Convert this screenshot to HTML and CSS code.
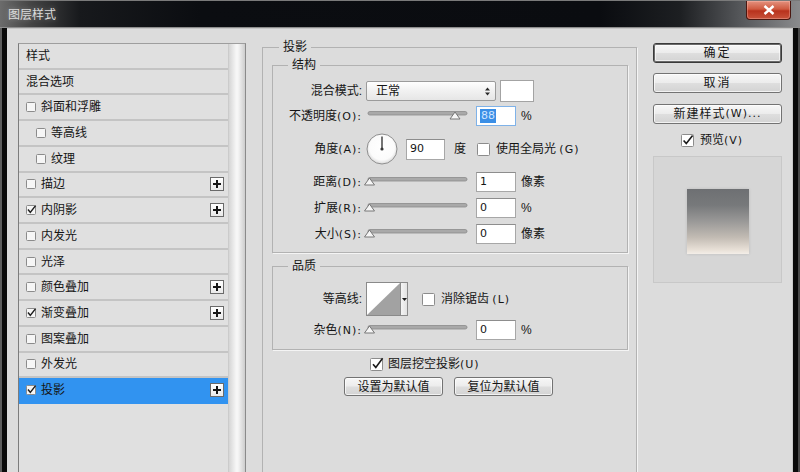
FILE: index.html
```html
<!DOCTYPE html>
<html lang="zh-CN">
<head>
<meta charset="utf-8">
<title>图层样式</title>
<link rel="stylesheet" href="styles.css">
</head>
<body>
<div class="window">
  <div class="titlebar">
    <span class="title">图层样式</span>
    <span class="close"><svg viewBox="0 0 12 10" width="12" height="10"><path d="M1.5 1L10.5 9M10.5 1L1.5 9"/></svg></span>
  </div>
  <div class="frame">
    <div class="client">
      <div class="col-left">
        <div class="listbox">
          <ul class="list">
            <li class="item"><span>样式</span></li>
            <li class="item"><span>混合选项</span></li>
            <li class="item"><svg class="lcb" viewBox="0 0 10 10"><rect x="0.5" y="0.5" width="9" height="9" rx="1"/></svg><span>斜面和浮雕</span></li>
            <li class="item sub"><svg class="lcb" viewBox="0 0 10 10"><rect x="0.5" y="0.5" width="9" height="9" rx="1"/></svg><span>等高线</span></li>
            <li class="item sub"><svg class="lcb" viewBox="0 0 10 10"><rect x="0.5" y="0.5" width="9" height="9" rx="1"/></svg><span>纹理</span></li>
            <li class="item"><svg class="lcb" viewBox="0 0 10 10"><rect x="0.5" y="0.5" width="9" height="9" rx="1"/></svg><span>描边</span><span class="plus"><svg viewBox="0 0 12 12"><path d="M6 2v8M2 6h8"/></svg></span></li>
            <li class="item"><svg class="lcb" viewBox="0 0 10 10"><rect x="0.5" y="0.5" width="9" height="9" rx="1"/><path d="M2 4.6L4.3 7.4L9.6 0.6"/></svg><span>内阴影</span><span class="plus"><svg viewBox="0 0 12 12"><path d="M6 2v8M2 6h8"/></svg></span></li>
            <li class="item"><svg class="lcb" viewBox="0 0 10 10"><rect x="0.5" y="0.5" width="9" height="9" rx="1"/></svg><span>内发光</span></li>
            <li class="item"><svg class="lcb" viewBox="0 0 10 10"><rect x="0.5" y="0.5" width="9" height="9" rx="1"/></svg><span>光泽</span></li>
            <li class="item"><svg class="lcb" viewBox="0 0 10 10"><rect x="0.5" y="0.5" width="9" height="9" rx="1"/></svg><span>颜色叠加</span><span class="plus"><svg viewBox="0 0 12 12"><path d="M6 2v8M2 6h8"/></svg></span></li>
            <li class="item"><svg class="lcb" viewBox="0 0 10 10"><rect x="0.5" y="0.5" width="9" height="9" rx="1"/><path d="M2 4.6L4.3 7.4L9.6 0.6"/></svg><span>渐变叠加</span><span class="plus"><svg viewBox="0 0 12 12"><path d="M6 2v8M2 6h8"/></svg></span></li>
            <li class="item"><svg class="lcb" viewBox="0 0 10 10"><rect x="0.5" y="0.5" width="9" height="9" rx="1"/></svg><span>图案叠加</span></li>
            <li class="item"><svg class="lcb" viewBox="0 0 10 10"><rect x="0.5" y="0.5" width="9" height="9" rx="1"/></svg><span>外发光</span></li>
            <li class="item selected"><svg class="lcb" viewBox="0 0 10 10"><rect x="0.5" y="0.5" width="9" height="9" rx="1"/><path d="M2 4.6L4.3 7.4L9.6 0.6"/></svg><span>投影</span><span class="plus"><svg viewBox="0 0 12 12"><path d="M6 2v8M2 6h8"/></svg></span></li>
          </ul>
          <div class="scrollbar"></div>
        </div>
      </div>

      <div class="col-mid">
        <fieldset class="group outer">
          <legend>投影</legend>
          <fieldset class="group inner struct">
            <legend>结构</legend>
            <div class="frow r1">
              <span class="lbl">混合模式:</span>
              <div class="select"><span>正常</span><svg class="updown" viewBox="0 0 5 9" width="5" height="9"><path d="M0 3.6L2.5 0.4L5 3.6ZM0 5.4L2.5 8.6L5 5.4Z"/></svg></div>
              <span class="swatch"></span>
            </div>
            <div class="frow r2">
              <span class="lbl">不透明度<span class="en">(O):</span></span>
              <svg class="slider" viewBox="0 0 108 14" width="108" height="14"><rect class="track" x="4" y="2.5" width="99" height="3.5" rx="1.75"/><path class="thumb" d="M91 3L96 10H86Z"/></svg>
              <span class="num focus"><span class="sel">88</span></span>
              <span class="unit">%</span>
            </div>
            <div class="frow r3">
              <span class="lbl">角度<span class="en">(A):</span></span>
              <svg class="dial" viewBox="0 0 32 32" width="32" height="32">
                <defs><radialGradient id="dg" cx="50%" cy="45%" r="55%"><stop offset="0" stop-color="#ffffff"/><stop offset="0.75" stop-color="#fbfbfb"/><stop offset="1" stop-color="#d9d9d9"/></radialGradient></defs>
                <circle cx="16" cy="16" r="15" fill="url(#dg)" stroke="#8f8f8f"/>
                <path d="M16 16V3.5" stroke="#3a3a3a" stroke-width="1.4"/>
                <circle cx="16" cy="16" r="1.6" fill="#3a3a3a"/>
              </svg>
              <span class="num angle">90</span>
              <span class="deg">度</span>
              <svg class="cb gl" viewBox="0 0 13 13" width="13" height="13"><rect x="0.5" y="0.5" width="12" height="12" rx="1"/></svg>
              <span class="cbtext">使用全局光 <span class="en">(G)</span></span>
            </div>
            <div class="frow r4">
              <span class="lbl">距离<span class="en">(D):</span></span>
              <svg class="slider" viewBox="0 0 108 14" width="108" height="14"><rect class="track" x="4" y="2.5" width="99" height="3.5" rx="1.75"/><path class="thumb" d="M5.5 3L10.5 10H0.5Z"/></svg>
              <span class="num">1</span>
              <span class="unit">像素</span>
            </div>
            <div class="frow r5">
              <span class="lbl">扩展<span class="en">(R):</span></span>
              <svg class="slider" viewBox="0 0 108 14" width="108" height="14"><rect class="track" x="4" y="2.5" width="99" height="3.5" rx="1.75"/><path class="thumb" d="M5.5 3L10.5 10H0.5Z"/></svg>
              <span class="num">0</span>
              <span class="unit">%</span>
            </div>
            <div class="frow r6">
              <span class="lbl">大小<span class="en">(S):</span></span>
              <svg class="slider" viewBox="0 0 108 14" width="108" height="14"><rect class="track" x="4" y="2.5" width="99" height="3.5" rx="1.75"/><path class="thumb" d="M5.5 3L10.5 10H0.5Z"/></svg>
              <span class="num">0</span>
              <span class="unit">像素</span>
            </div>
          </fieldset>

          <fieldset class="group inner quality">
            <legend>品质</legend>
            <div class="frow q1">
              <span class="lbl">等高线:</span>
              <svg class="contour" viewBox="0 0 35 34" width="35" height="34"><rect x="0.5" y="0.5" width="34" height="33"/><path d="M1 33L34 1V33Z"/></svg>
              <span class="ddarrow"><svg viewBox="0 0 5 3" width="5" height="3"><path d="M0 0H5L2.5 3Z"/></svg></span>
              <svg class="cb aa" viewBox="0 0 13 13" width="13" height="13"><rect x="0.5" y="0.5" width="12" height="12" rx="1"/></svg>
              <span class="cbtext">消除锯齿 <span class="en">(L)</span></span>
            </div>
            <div class="frow q2">
              <span class="lbl">杂色<span class="en">(N):</span></span>
              <svg class="slider" viewBox="0 0 108 14" width="108" height="14"><rect class="track" x="4" y="2.5" width="99" height="3.5" rx="1.75"/><path class="thumb" d="M5.5 3L10.5 10H0.5Z"/></svg>
              <span class="num">0</span>
              <span class="unit">%</span>
            </div>
          </fieldset>

          <div class="knock">
            <svg class="cb" viewBox="0 0 14 14" width="14" height="14"><rect x="0.5" y="1.5" width="12" height="12" rx="1"/><path d="M3 7.2L5.8 10.4L12.6 1.2"/></svg>
            <span class="cbtext">图层挖空投影<span class="en">(U)</span></span>
          </div>
          <div class="defaults">
            <button class="btn small">设置为默认值</button>
            <button class="btn small">复位为默认值</button>
          </div>
        </fieldset>
      </div>

      <div class="col-right">
        <button class="btn main default">确定</button>
        <button class="btn main cancel">取消</button>
        <button class="btn main newstyle">新建样式<span class="en">(W)...</span></button>
        <div class="preview-toggle">
          <svg class="cb" viewBox="0 0 13 13" width="13" height="13"><rect x="0.5" y="0.5" width="12" height="12" rx="1"/><path d="M2.6 6.4L5.3 9.6L11.6 1.6"/></svg>
          <span class="cbtext">预览<span class="en">(V)</span></span>
        </div>
        <div class="preview">
          <div class="sample"></div>
        </div>
      </div>
    </div>
  </div>
</div>
</body>
</html>
```

FILE: styles.css
```css
* { box-sizing: border-box; }

html, body {
  margin: 0;
  padding: 0;
}

body {
  width: 800px;
  height: 472px;
  overflow: hidden;
  background: #0b0b0b;
  font-family: "Liberation Sans", "Noto Sans CJK SC", sans-serif;
  font-size: 12px;
  line-height: 16px;
  color: #151515;
}

.window {
  display: flex;
  flex-direction: column;
  width: 800px;
  height: 472px;
  overflow: hidden;
}

/* ---------- title bar ---------- */
.titlebar {
  height: 28px;
  flex: none;
  display: flex;
  justify-content: space-between;
  align-items: flex-start;
  padding-left: 8px;
  border-top: 1px solid #7a7a7a;
  border-bottom: 1px solid #8e8e8e;
  background: linear-gradient(90deg, #6c6c6c 0, #454545 30px, #17191c 80px, #0b0d11 200px, #0a0c10 600px, #1d1f22 680px, #55575a 740px, #8a8b8d 800px);
}

.title {
  margin-top: 6px;
  color: #dcdcdc;
  font-size: 12px;
  line-height: 16px;
  text-shadow: 0 0 5px rgba(255, 255, 255, 0.35);
}

.close {
  width: 45px;
  height: 19px;
  margin-right: 9px;
  display: flex;
  align-items: center;
  justify-content: center;
  border: 1px solid #4a1710;
  border-top: none;
  border-radius: 0 0 4px 4px;
  background: linear-gradient(#e4927f, #cf5a40 45%, #b8321d 55%, #c8523a);
  box-shadow: inset 0 0 0 1px rgba(255, 200, 190, 0.35);
}

.close svg path {
  stroke: #ffffff;
  stroke-width: 2.4;
  fill: none;
}

/* ---------- frame ---------- */
.frame {
  flex: 1;
  display: flex;
  min-height: 0;
  padding: 0 8px 0 7px;
  background: #0b0b0b;
  box-shadow: inset 2px 0 #5e5e5e, inset -2px 0 #4a4a4a;
}

.client {
  flex: 1;
  height: 444px;
  display: flex;
  gap: 16px;
  padding: 10px 10px 0 11px;
  background: #dcdcdc;
  border-top: 1px solid #c6c6c6;
  border-right: 1px solid #c9c9c9;
}

/* ---------- left list ---------- */
.col-left {
  width: 228px;
  flex: none;
  padding-top: 4px;
}

.listbox {
  display: flex;
  width: 228px;
  height: 429px;
  border-left: 1px solid #7c7c7c;
  border-top: 1px solid #9e9e9e;
  border-right: 1px solid #8a8a8a;
  background: #e0e0e0;
}

.list {
  list-style: none;
  margin: 0;
  padding: 0;
  width: 209px;
  flex: none;
}

.item {
  display: flex;
  align-items: center;
  height: 25.72px;
  padding-left: 7px;
  border-bottom: 2px solid #c4c4c4;
  white-space: nowrap;
}

.item.sub {
  padding-left: 17px;
}

.item.selected {
  background: #3193f0;
  border-bottom-color: #3193f0;
}

.lcb {
  width: 10px;
  height: 10px;
  flex: none;
  margin-right: 5px;
  overflow: visible;
}

.lcb rect {
  fill: #f6f6f6;
  stroke: #8b8b8b;
  stroke-width: 1;
}

.lcb path {
  fill: none;
  stroke: #1c1c1c;
  stroke-width: 1.5;
}

.plus {
  margin-left: auto;
  margin-right: 4px;
  width: 14px;
  height: 14px;
  display: flex;
  align-items: center;
  justify-content: center;
  border: 1px solid #6a6a6a;
  background: linear-gradient(#ffffff, #e9e9e9);
}

.plus svg {
  width: 12px;
  height: 12px;
}

.plus path {
  stroke: #161616;
  stroke-width: 2;
  fill: none;
}

.scrollbar {
  width: 17px;
  flex: none;
  border-left: 1px solid #cbcbcb;
  background: linear-gradient(90deg, #d5d5d5, #f6f6f6 45%, #f6f6f6 55%, #cdcdcd);
}

/* ---------- middle groups ---------- */
.col-mid {
  width: 375px;
  flex: none;
}

.group {
  margin: 0;
  padding: 0;
  min-width: 0;
  border: 1px solid #b2b2b2;
  box-shadow: 1px 1px 0 #f4f4f4;
}

.group > legend {
  padding: 0 4px;
  height: 16px;
  line-height: 16px;
  color: #151515;
}

.outer {
  width: 375px;
  height: 433px;
  border-bottom: none;
}

.outer > legend {
  margin-left: 16px;
}

.inner {
  margin: 0 8px 0 9px;
}

.inner > legend {
  margin-left: 15px;
}

.struct {
  margin-top: 2px;
  padding: 7px 0 7px 0;
}

.quality {
  margin-top: 5px;
  padding: 8px 0 8px 0;
}

.frow {
  display: flex;
  align-items: center;
  height: 22px;
  white-space: nowrap;
}

.r2 { margin-top: 3px; }
.r3 { margin-top: 6px; height: 32px; }
.r4 { margin-top: 6px; }
.r5 { margin-top: 4px; }
.r6 { margin-top: 4px; }
.q1 { height: 34px; }
.q2 { margin-top: 3px; }

.lbl {
  width: 89px;
  flex: none;
  text-align: right;
}

.en {
  font-family: "DejaVu Sans", "Liberation Sans", sans-serif;
  font-size: 11px;
  letter-spacing: 1px;
}

.select {
  width: 130px;
  height: 20px;
  margin-left: 4px;
  display: flex;
  align-items: center;
  justify-content: space-between;
  padding: 0 5px 0 9px;
  border: 1px solid #9b9b9b;
  border-radius: 2px;
  background: linear-gradient(#fefefe, #f1f1f1 50%, #e6e6e6);
}

.updown path {
  fill: #2a2a2a;
}

.swatch {
  width: 34px;
  height: 22px;
  margin-left: 4px;
  border: 1px solid #a3a3a3;
  background: #ffffff;
}

.slider {
  flex: none;
  margin-left: 2px;
  overflow: visible;
}

.slider .track {
  fill: #a9a9a9;
  stroke: #8a8a8a;
  stroke-width: 0.8;
}

.slider .thumb {
  fill: #f5f5f5;
  stroke: #767676;
  stroke-width: 1;
  stroke-linejoin: round;
}

.num {
  width: 40px;
  height: 20px;
  margin-left: 4px;
  display: flex;
  align-items: center;
  padding-left: 3px;
  border: 1px solid #a7a7a7;
  border-top-color: #8d8d8d;
  background: #ffffff;
  font-family: "DejaVu Sans", "Liberation Sans", sans-serif;
  font-size: 11px;
}

.num.focus {
  border-color: #7fb2e8;
}

.sel {
  background: #3b8fe6;
  color: #cfe5ff;
  padding: 0 1px;
  line-height: 14px;
}

.unit {
  margin-left: 5px;
}

.dial {
  flex: none;
  margin-left: 4px;
}

.num.angle {
  width: 39px;
  height: 21px;
  margin-left: 8px;
}

.deg {
  margin-left: 9px;
}

.cb {
  flex: none;
  overflow: visible;
}

.cb rect {
  fill: #ffffff;
  stroke: #8c8c8c;
  stroke-width: 1;
}

.cb path {
  fill: none;
  stroke: #1a1a1a;
  stroke-width: 1.6;
}

.cb.gl {
  margin-left: 11px;
}

.cbtext {
  margin-left: 6px;
}

.contour {
  flex: none;
  margin-left: 4px;
}

.contour rect {
  fill: #ffffff;
  stroke: #8a8a8a;
}

.contour path {
  fill: #a2a2a2;
}

.ddarrow {
  width: 7px;
  height: 34px;
  display: flex;
  align-items: center;
  justify-content: center;
  border: 1px solid #8a8a8a;
  border-left: none;
  background: linear-gradient(90deg, #f4f4f4, #e2e2e2);
}

.ddarrow path {
  fill: #1a1a1a;
}

.cb.aa {
  margin-left: 14px;
}

.knock {
  display: flex;
  align-items: center;
  height: 14px;
  margin-top: 7px;
  padding-left: 107px;
}

.knock .cbtext {
  margin-left: 4px;
}

.defaults {
  display: flex;
  gap: 11px;
  margin-top: 6px;
  padding-left: 81px;
}

/* ---------- buttons ---------- */
.btn {
  margin: 0;
  padding: 0;
  font-family: "Liberation Sans", "Noto Sans CJK SC", sans-serif;
  font-size: 12px;
  line-height: 16px;
  color: #151515;
  border: 1px solid #737373;
  border-radius: 3px;
  background: linear-gradient(#f7f7f7, #ececec 48%, #dedede 52%, #d3d3d3);
  box-shadow: inset 0 0 0 1px rgba(255, 255, 255, 0.7);
  display: flex;
  align-items: center;
  justify-content: center;
  white-space: nowrap;
}

.btn.small {
  width: 99px;
  height: 19px;
}

/* ---------- right column ---------- */
.col-right {
  width: 129px;
  flex: none;
  display: flex;
  flex-direction: column;
  padding-top: 4px;
}

.btn.main {
  width: 129px;
  height: 20px;
  letter-spacing: 2px;
}

.btn.default {
  border-color: #3a3a3a;
  box-shadow: inset 0 0 0 1px #6a6a6a, inset 0 0 0 2px rgba(255, 255, 255, 0.6);
}

.btn.cancel {
  margin-top: 10px;
}

.btn.newstyle {
  margin-top: 11px;
  letter-spacing: 1px;
}

.preview-toggle {
  display: flex;
  align-items: center;
  height: 14px;
  margin-top: 9px;
  padding-left: 28px;
}

.preview {
  width: 129px;
  height: 127px;
  margin-top: 9px;
  display: flex;
  align-items: center;
  justify-content: center;
  border: 1px solid #c8c8c8;
  background: #d6d6d6;
}

.sample {
  width: 62px;
  height: 65px;
  margin-top: 3px;
  background: linear-gradient(#6e7073, #77797b 25%, #9a9998 50%, #c3bcb4 75%, #e9e1d8 94%, #f3eee8 100%);
  box-shadow: 0 0 3px rgba(0, 0, 0, 0.12);
}
```
